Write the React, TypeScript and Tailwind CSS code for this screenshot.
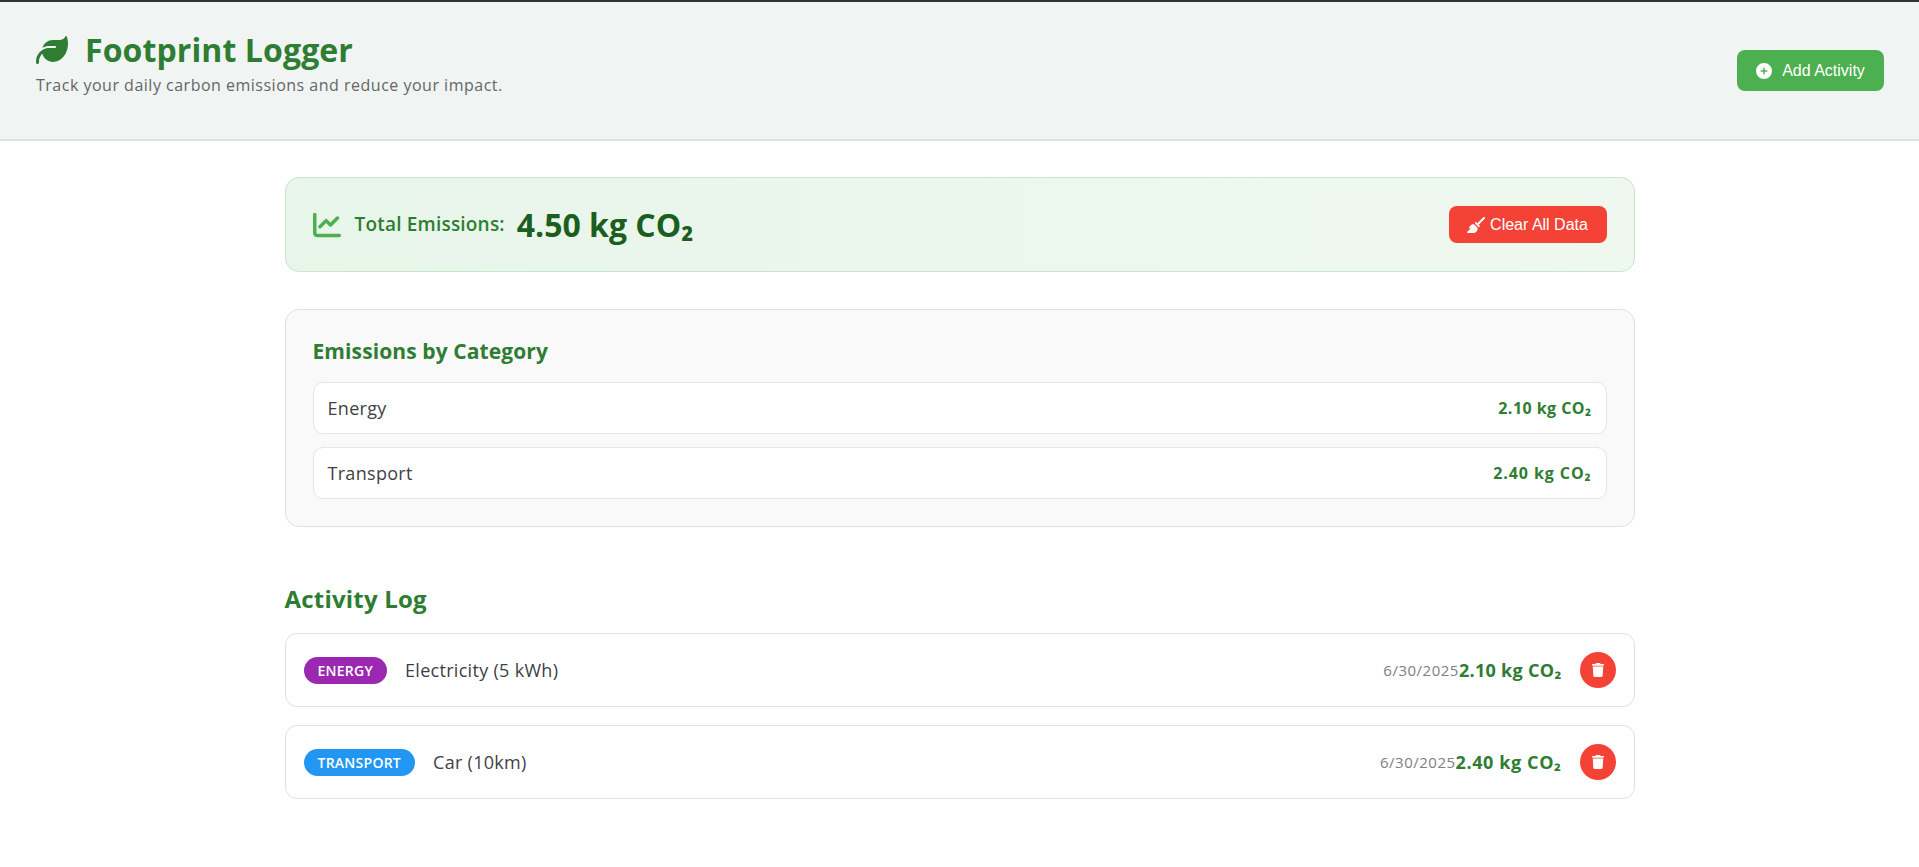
import { FaLeaf, FaCirclePlus, FaChartLine, FaBroom, FaTrash } from "react-icons/fa6";

const font = "font-['Open_Sans','Noto_Sans',sans-serif]";

function CategoryRow({ name, value, valueClass }: { name: string; value: string; valueClass: string }) {
  return (
    <div className="flex h-[52px] items-center justify-between rounded-[10px] border border-[#e6e6e6] bg-white px-[14px]">
      <span className="text-[18px] font-medium tracking-[0.3px] text-[#3f3f46]">{name}</span>
      <span className={`text-[16px] font-bold text-[#2e7d32] ${valueClass}`}>{value}</span>
    </div>
  );
}

function ActivityRow({ tag, tagClass, name, date, value, valueClass }: { tag: string; tagClass: string; name: string; date: string; value: string; valueClass: string }) {
  return (
    <div className="flex h-[74px] items-center justify-between rounded-[12px] border border-[#e0e0e0] bg-white pl-[18px] pr-[18px]">
      <div className="flex items-center gap-[18px]">
        <span className={`flex h-[27px] items-center rounded-full px-[14px] text-[14px] font-semibold tracking-[0.25px] text-white ${tagClass}`}>{tag}</span>
        <span className="text-[18px] font-medium tracking-[0.3px] text-[#3f3f46]">{name}</span>
      </div>
      <div className="flex items-center">
        <span className="text-[15px] tracking-[0.5px] text-[#808080]">{date}</span>
        <span className={`text-[18px] font-bold text-[#2e7d32] ${valueClass}`}>{value}</span>
        <button className="ml-[18px] flex h-9 w-9 items-center justify-center rounded-full bg-[#f44336] text-[14px] text-white">
          <FaTrash />
        </button>
      </div>
    </div>
  );
}

export default function App() {
  return (
    <div className={`min-h-[867px] bg-white ${font}`}>
      <div className="h-[2px] bg-[#333333]" />
      <header className="flex h-[139px] items-center justify-between border-b-2 border-[#e0e0e0] bg-[#f0f4f3] pl-[36px] pr-[35px]">
        <div className="-mt-[14px]">
          <h1 className="flex items-center gap-[17px] text-[32px] font-bold leading-[40px] tracking-[0.1px] text-[#2e7d32]">
            <FaLeaf className="text-[32px]" />
            Footprint Logger
          </h1>
          <p className="mt-[3px] text-[16px] leading-[24px] tracking-[0.5px] text-[#666666]">Track your daily carbon emissions and reduce your impact.</p>
        </div>
        <button className="flex h-[41px] w-[147px] items-center justify-center gap-[10px] rounded-[8px] bg-[#4caf50] font-['Liberation_Sans',sans-serif] text-[16px] text-white">
          <FaCirclePlus className="text-[16px]" />
          Add Activity
        </button>
      </header>

      <main className="mx-auto w-[1350px] pt-[36px]">
        <section className="flex h-[95px] items-center justify-between rounded-[14px] border border-[#c8e6c9] bg-gradient-to-r from-[#e8f5e9] to-[#eef8ef] pl-[27px] pr-[27px]">
          <div className="flex items-center">
            <FaChartLine className="mr-[14px] text-[28px] text-[#4caf50]" />
            <span className="text-[19px] font-semibold tracking-[0.2px] text-[#2e7d32]">Total Emissions:</span>
            <span className="ml-[12px] text-[32px] font-bold text-[#1b5e20]">4.50 kg CO₂</span>
          </div>
          <button className="flex h-[37px] w-[158px] items-center justify-center gap-[5px] rounded-[8px] bg-[#f44336] font-['Liberation_Sans',sans-serif] text-[16px] text-white">
            <FaBroom className="text-[18px]" />
            Clear All Data
          </button>
        </section>

        <section className="mt-[37px] h-[218px] rounded-[14px] border border-[#e0e0e0] bg-[#f9f9f9] px-[27px] pt-[27px]">
          <h3 className="text-[21px] font-bold leading-[28px] tracking-[0.1px] text-[#2e7d32]">Emissions by Category</h3>
          <div className="mt-[17px] flex flex-col gap-[13px]">
            <CategoryRow name="Energy" value="2.10 kg CO₂" valueClass="tracking-[0.45px]" />
            <CategoryRow name="Transport" value="2.40 kg CO₂" valueClass="tracking-[0.9px]" />
          </div>
        </section>

        <h2 className="mt-[56px] text-[24px] font-bold leading-[32px] tracking-[0.2px] text-[#2e7d32]">Activity Log</h2>
        <div className="mt-[18px] flex flex-col gap-[18px]">
          <ActivityRow tag="ENERGY" tagClass="bg-[#9c27b0]" name="Electricity (5 kWh)" date="6/30/2025" value="2.10 kg CO₂" valueClass="tracking-[0.3px]" />
          <ActivityRow tag="TRANSPORT" tagClass="bg-[#2196f3]" name="Car (10km)" date="6/30/2025" value="2.40 kg CO₂" valueClass="tracking-[0.6px]" />
        </div>
      </main>
    </div>
  );
}
